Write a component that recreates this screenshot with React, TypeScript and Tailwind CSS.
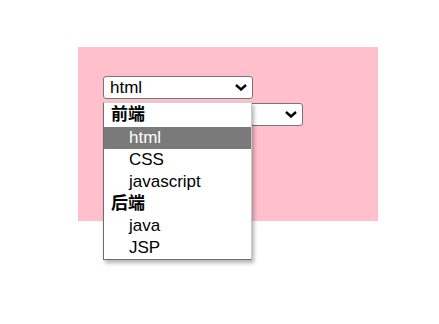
import React from "react";

const font = "font-['Liberation_Sans','Noto_Sans_CJK_SC',sans-serif]";

function Chevron() {
  return (
    <svg width="12" height="7" viewBox="0 0 12 7" className="shrink-0">
      <path d="M1 1 L6 5.5 L11 1" fill="none" stroke="#000" strokeWidth="2.4" />
    </svg>
  );
}

function SelectBox({ width, value }: { width: string; value: string }) {
  return (
    <div
      className={`${width} h-[23px] flex items-center justify-between pl-[6px] pr-[5px] bg-white border border-[#767676] rounded-[3px] text-[17px] leading-[21px] text-black`}
    >
      <span>{value}</span>
      <Chevron />
    </div>
  );
}

type Row = { label: string; group?: boolean; selected?: boolean };

const ROWS: Row[] = [
  { label: "前端", group: true },
  { label: "html", selected: true },
  { label: "CSS" },
  { label: "javascript" },
  { label: "后端", group: true },
  { label: "java" },
  { label: "JSP" },
];

export default function App() {
  return (
    <div className={`min-h-screen bg-white pt-[47px] pl-[78px] ${font}`}>
      <div className="relative w-[300px] h-[174px] bg-[#ffc0cb] pt-[29px] pl-[25px]">
        <div className="flex flex-col items-start gap-[4px]">
          <SelectBox width="w-[150px]" value="html" />
          {/* second select: its value sits under the open list */}
          <SelectBox width="w-[200px]" value="" />
        </div>

        {/* open option list of the first select */}
        <div className="absolute left-[25px] top-[55px] w-[149px] bg-white border-l border-b border-[#6e6e6e] border-t border-t-[#d0d0d0] border-r border-r-[#c8c8c8] shadow-[2px_3px_4px_rgba(0,0,0,0.3)]">
          {ROWS.map((r, i) => (
            <div
              key={r.label}
              className={
                r.group
                  ? `${i === 0 ? "h-[24px]" : "h-[22px]"} flex items-center pl-[7px] text-[17px] font-bold text-black`
                  : `h-[22px] flex items-center pl-[25px] text-[17px] ${
                      r.selected ? "bg-[#7a7a7a] text-white" : "text-black"
                    }`
              }
            >
              {r.label}
            </div>
          ))}
        </div>
      </div>
    </div>
  );
}
